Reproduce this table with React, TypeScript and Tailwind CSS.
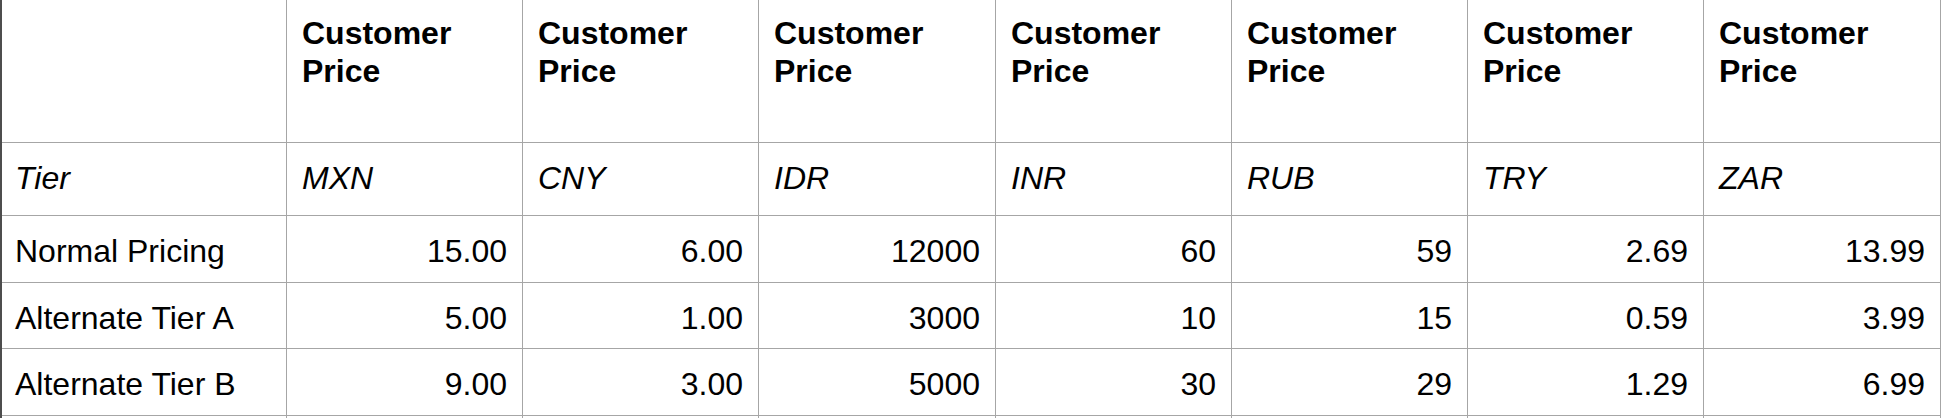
import React from "react";

const currencies = ["MXN", "CNY", "IDR", "INR", "RUB", "TRY", "ZAR"];
const widths = [
  "w-[236px]",
  "w-[236px]",
  "w-[237px]",
  "w-[236px]",
  "w-[236px]",
  "w-[236px]",
  "w-[237px]",
];
const rows: string[][] = [
  ["Normal Pricing", "15.00", "6.00", "12000", "60", "59", "2.69", "13.99"],
  ["Alternate Tier A", "5.00", "1.00", "3000", "10", "15", "0.59", "3.99"],
  ["Alternate Tier B", "9.00", "3.00", "5000", "30", "29", "1.29", "6.99"],
];

export default function App() {
  return (
    <div className="h-[418px] w-[1946px] overflow-hidden bg-white text-black font-['Liberation_Sans',Arial,sans-serif] text-[32px] leading-[38px]">
      <div className="w-fit border-l-2 border-[#4d4d4d]">
        {/* header row */}
        <div className="flex h-[143px] border-b border-[#a6a6a6]">
          <div className="w-[285px] shrink-0 border-r border-[#a6a6a6]" />
          {widths.map((w, i) => (
            <div
              key={i}
              className={`${w} shrink-0 border-r border-[#a6a6a6] px-[15px] pt-[14px] font-bold`}
            >
              Customer
              <br />
              Price
            </div>
          ))}
        </div>
        {/* currency row */}
        <div className="flex h-[73px] border-b border-[#a6a6a6] italic">
          <div className="w-[285px] shrink-0 border-r border-[#a6a6a6] px-[13px] pt-[16px]">
            Tier
          </div>
          {currencies.map((c, i) => (
            <div
              key={c}
              className={`${widths[i]} shrink-0 border-r border-[#a6a6a6] px-[15px] pt-[16px]`}
            >
              {c}
            </div>
          ))}
        </div>
        {rows.map((r, ri) => (
          <div
            key={ri}
            className={`flex ${ri === 1 ? "h-[66px]" : "h-[67px]"} border-b border-[#a6a6a6]`}
          >
            <div className="w-[285px] shrink-0 border-r border-[#a6a6a6] px-[13px] pt-[16px]">
              {r[0]}
            </div>
            {r.slice(1).map((v, i) => (
              <div
                key={i}
                className={`${widths[i]} shrink-0 border-r border-[#a6a6a6] px-[15px] pt-[16px] text-right`}
              >
                {v}
              </div>
            ))}
          </div>
        ))}
        {/* partially visible next row */}
        <div className="flex h-[66px]">
          <div className="w-[285px] shrink-0 border-r border-[#a6a6a6]" />
          {widths.map((w, i) => (
            <div key={i} className={`${w} shrink-0 border-r border-[#a6a6a6]`} />
          ))}
        </div>
      </div>
    </div>
  );
}
